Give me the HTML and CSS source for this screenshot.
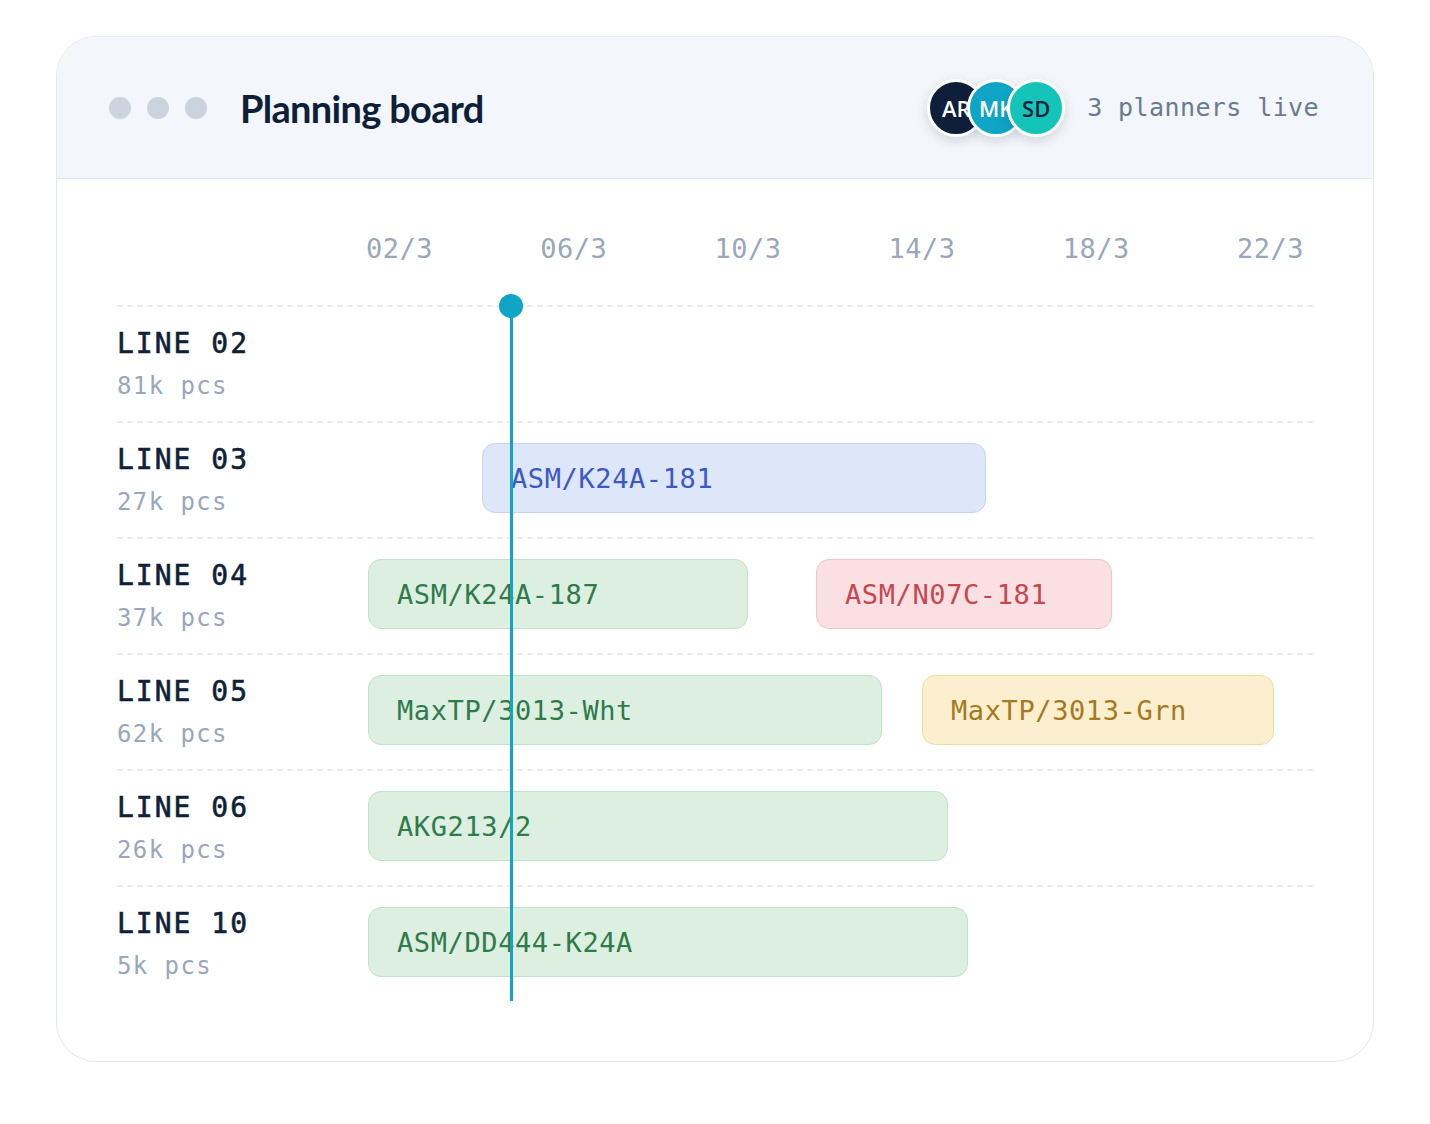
FILE: index.html
```html
<!DOCTYPE html>
<html lang="en">
<head>
    <meta charset="UTF-8">
    <meta name="viewport" content="width=device-width, initial-scale=1.0">
    <title>Planning board</title>
    <link rel="stylesheet" href="styles.css">
</head>
<body>
    <div class="board">
        <div class="board-head">
            <div class="dots">
                <span class="dot"></span>
                <span class="dot"></span>
                <span class="dot"></span>
            </div>
            <h1 class="title">Planning board</h1>
            <div class="live">
                <div class="avatars">
                    <span class="avatar avatar-ar">AR</span>
                    <span class="avatar avatar-mk">MK</span>
                    <span class="avatar avatar-sd">SD</span>
                </div>
                <span class="live-text">3 planners live</span>
            </div>
        </div>

        <div class="board-body">
            <div class="dates">
                <div></div>
                <div class="date-list">
                    <span>02/3</span>
                    <span>06/3</span>
                    <span>10/3</span>
                    <span>14/3</span>
                    <span>18/3</span>
                    <span>22/3</span>
                </div>
            </div>

            <div class="rows">
                <div class="row">
                    <div class="line-label">
                        <div class="line-name">LINE 02</div>
                        <div class="line-qty">81k pcs</div>
                    </div>
                    <div class="track"></div>
                </div>
                <div class="row">
                    <div class="line-label">
                        <div class="line-name">LINE 03</div>
                        <div class="line-qty">27k pcs</div>
                    </div>
                    <div class="track">
                        <div class="bar bar-blue" style="left: 116px; width: 504px;">ASM/K24A-181</div>
                    </div>
                </div>
                <div class="row">
                    <div class="line-label">
                        <div class="line-name">LINE 04</div>
                        <div class="line-qty">37k pcs</div>
                    </div>
                    <div class="track">
                        <div class="bar bar-green" style="left: 2px; width: 380px;">ASM/K24A-187</div>
                        <div class="bar bar-red" style="left: 450px; width: 296px;">ASM/N07C-181</div>
                    </div>
                </div>
                <div class="row">
                    <div class="line-label">
                        <div class="line-name">LINE 05</div>
                        <div class="line-qty">62k pcs</div>
                    </div>
                    <div class="track">
                        <div class="bar bar-green" style="left: 2px; width: 514px;">MaxTP/3013-Wht</div>
                        <div class="bar bar-yellow" style="left: 556px; width: 352px;">MaxTP/3013-Grn</div>
                    </div>
                </div>
                <div class="row">
                    <div class="line-label">
                        <div class="line-name">LINE 06</div>
                        <div class="line-qty">26k pcs</div>
                    </div>
                    <div class="track">
                        <div class="bar bar-green" style="left: 2px; width: 580px;">AKG213/2</div>
                    </div>
                </div>
                <div class="row">
                    <div class="line-label">
                        <div class="line-name">LINE 10</div>
                        <div class="line-qty">5k pcs</div>
                    </div>
                    <div class="track">
                        <div class="bar bar-green" style="left: 2px; width: 600px;">ASM/DD444-K24A</div>
                    </div>
                </div>

                <!-- today marker -->
                <div class="today"></div>
            </div>
        </div>
    </div>
</body>
</html>
```

FILE: styles.css
```css
* {
    box-sizing: border-box;
}

body {
    margin: 0;
    background-color: #fff;
    font-family: "DejaVu Sans Mono", monospace;
}

.board {
    width: 1318px;
    margin: 36px 0 0 56px;
    border: 1px solid #e2e8f0;
    border-radius: 40px;
    overflow: hidden;
    background-color: #fff;
}

.board-head {
    height: 142px;
    padding: 0 54px 0 52px;
    display: flex;
    align-items: center;
    background-color: #f3f6fa;
    border-bottom: 1px solid #e2e8f0;
}

.dots {
    display: flex;
    gap: 16px;
    margin-right: 33px;
}

.dot {
    width: 22px;
    height: 22px;
    border-radius: 50%;
    background-color: #cbd3df;
}

.title {
    margin: 0;
    font-family: Lato, "Open Sans", sans-serif;
    font-size: 38px;
    font-weight: 700;
    letter-spacing: -0.7px;
    color: #0f1f3a;
}

.live {
    margin-left: auto;
    display: flex;
    align-items: center;
    gap: 22px;
}

.avatars {
    display: flex;
}

.avatar {
    width: 58px;
    height: 58px;
    border-radius: 50%;
    border: 3px solid #fff;
    display: flex;
    align-items: center;
    justify-content: center;
    font-family: "Open Sans", sans-serif;
    font-size: 22px;
    font-weight: 600;
    color: #fff;
    box-shadow: 0 4px 12px rgba(15, 31, 58, 0.14);
}

.avatar + .avatar {
    margin-left: -18px;
}

.avatar-ar {
    background-color: #0f1f3a;
}

.avatar-mk {
    background-color: #0fa5c6;
}

.avatar-sd {
    background-color: #14c4b9;
    color: #0f1f3a;
}

.live-text {
    font-size: 25px;
    letter-spacing: 0.4px;
    color: #6b7a90;
}

.board-body {
    padding: 56px 60px 60px;
}

.dates {
    display: grid;
    grid-template-columns: 249px 1fr;
    margin-bottom: 42px;
}

.date-list {
    display: flex;
    justify-content: space-between;
    padding-right: 9px;
    font-size: 27px;
    line-height: 28px;
    letter-spacing: 0.5px;
    color: #9aa7ba;
}

.rows {
    position: relative;
}

.row {
    height: 116px;
    display: grid;
    grid-template-columns: 249px 1fr;
    align-items: center;
    border-top: 2px dashed #e6ebf2;
}

.line-name {
    font-size: 28px;
    line-height: 34px;
    letter-spacing: 2px;
    color: #0f1f3a;
    -webkit-text-stroke: 0.6px #0f1f3a;
}

.line-qty {
    margin-top: 10px;
    font-size: 24px;
    line-height: 30px;
    letter-spacing: 1.4px;
    color: #9aa7ba;
}

.track {
    position: relative;
    height: 100%;
}

.bar {
    position: absolute;
    top: 20px;
    height: 70px;
    padding-left: 28px;
    display: flex;
    align-items: center;
    border: 1.5px solid;
    border-radius: 13px;
    font-size: 27px;
    letter-spacing: 0.6px;
    white-space: nowrap;
}

.bar-blue {
    background-color: #dee6fa;
    border-color: #c6d3f6;
    color: #3c58c8;
}

.bar-green {
    background-color: #dcefe0;
    border-color: #bfe2c8;
    color: #2f7b4c;
}

.bar-red {
    background-color: #fbe0e3;
    border-color: #f2c5ca;
    color: #c8474f;
}

.bar-yellow {
    background-color: #fcefcf;
    border-color: #f2dc9c;
    color: #a57a1e;
}

.today {
    position: absolute;
    top: 0;
    bottom: 0;
    left: 392.5px;
    width: 3px;
    background-color: #0ea5c6;
}

.today::before {
    content: "";
    position: absolute;
    top: -11px;
    left: -10.5px;
    width: 24px;
    height: 24px;
    border-radius: 50%;
    background-color: #0ea5c6;
}
```
